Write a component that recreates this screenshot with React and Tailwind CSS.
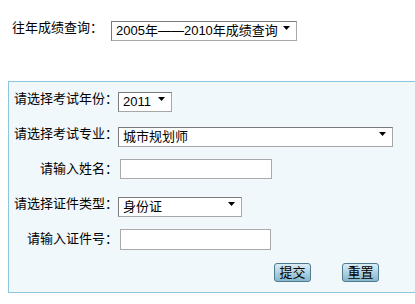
import React, { useState } from "react";

const font = { fontFamily: '"Liberation Sans", "Noto Sans CJK SC", sans-serif' };

const Arrow = () => (
  <svg
    className="pointer-events-none absolute right-[7px] top-1/2 -translate-y-1/2"
    width="7"
    height="4"
    viewBox="0 0 7 4"
  >
    <polygon points="0,0 7,0 3.5,4" fill="#000" />
  </svg>
);

const Select = ({ width, value, onChange, options }) => (
  <div className="relative h-[20px]" style={{ width }}>
    <select
      value={value}
      onChange={(e) => onChange(e.target.value)}
      className="h-full w-full appearance-none border border-[#a7a7a7] border-t-[#7a7a7a] border-l-[#7a7a7a] bg-white pl-[4px] pr-[18px] text-[13px] leading-[18px] text-black outline-none"
    >
      {options.map((o) => (
        <option key={o} value={o}>
          {o}
        </option>
      ))}
    </select>
    <Arrow />
  </div>
);

const Field = ({ label, children }) => (
  <div className="flex h-[20px] items-center">
    <div className="w-[109px] shrink-0 text-right text-[13px] text-black">{label}</div>
    {children}
  </div>
);

const Button = ({ children }) => (
  <button className="h-[19px] w-[37px] rounded-[3px] border border-[#4f7a90] bg-gradient-to-b from-[#d9edf6] to-[#86b6cd] text-[13px] leading-[17px] text-black">
    {children}
  </button>
);

export default function App() {
  const [history, setHistory] = useState("2005年——2010年成绩查询");
  const [year, setYear] = useState("2011");
  const [major, setMajor] = useState("城市规划师");
  const [idType, setIdType] = useState("身份证");
  const [name, setName] = useState("");
  const [idNo, setIdNo] = useState("");

  return (
    <div className="h-[304px] w-[415px] overflow-hidden bg-white" style={font}>
      {/* 往年成绩 */}
      <div className="flex items-center pl-[12px] pt-[18px]">
        <span className="w-[99px] text-[13px] text-black">往年成绩查询：</span>
        <Select
          width="186px"
          value={history}
          onChange={setHistory}
          options={["2005年——2010年成绩查询"]}
        />
      </div>

      {/* 查询表单 */}
      <div className="ml-[8px] mt-[43px] flex h-[212px] flex-col gap-[15px] border-y border-l border-[#8ac6de] bg-[#f1f8fc] pt-[7px]">
        <Field label="请选择考试年份：">
          <Select width="54px" value={year} onChange={setYear} options={["2011", "2010"]} />
        </Field>
        <Field label="请选择考试专业：">
          <Select width="275px" value={major} onChange={setMajor} options={["城市规划师"]} />
        </Field>
        <Field label="请输入姓名：">
          <input
            value={name}
            onChange={(e) => setName(e.target.value)}
            className="ml-[2px] h-[20px] w-[152px] border border-[#a9a9a9] bg-white outline-none"
          />
        </Field>
        <Field label="请选择证件类型：">
          <Select width="124px" value={idType} onChange={setIdType} options={["身份证", "护照"]} />
        </Field>
        <Field label="请输入证件号：">
          <input
            value={idNo}
            onChange={(e) => setIdNo(e.target.value)}
            className="ml-[2px] h-[21px] w-[151px] border border-[#a9a9a9] bg-white outline-none"
          />
        </Field>
        <div className="-mt-[1px] flex gap-[31px] pl-[265px]">
          <Button>提交</Button>
          <Button>重置</Button>
        </div>
      </div>
    </div>
  );
}
